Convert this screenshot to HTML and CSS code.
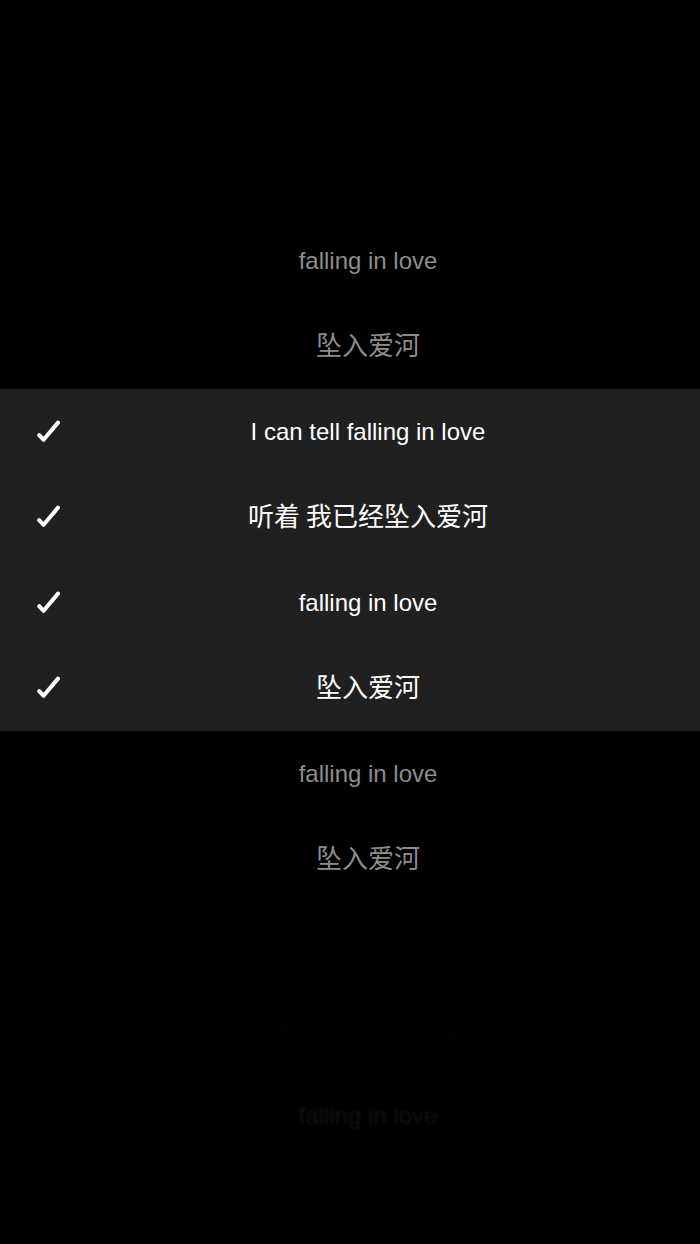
FILE: index.html
```html
<!DOCTYPE html>
<html lang="zh">
<head>
<meta charset="utf-8">
<title>Lyrics</title>
<link rel="stylesheet" href="styles.css">
</head>
<body>
<main class="lyrics">
  <div class="row dim"><span class="check"></span><span class="text en">falling in love</span><span></span></div>
  <div class="row dim"><span class="check"></span><span class="text zh">坠入爱河</span><span></span></div>
  <section class="band">
    <div class="row on"><span class="check"><svg viewBox="0 0 24 24" width="24" height="24"><path d="M3.2 15.2 L7.6 19.8 L22 2.6" fill="none" stroke="#fff" stroke-width="4" stroke-linecap="round" stroke-linejoin="round"/></svg></span><span class="text en">I can tell falling in love</span><span></span></div>
    <div class="row on"><span class="check"><svg viewBox="0 0 24 24" width="24" height="24"><path d="M3.2 15.2 L7.6 19.8 L22 2.6" fill="none" stroke="#fff" stroke-width="4" stroke-linecap="round" stroke-linejoin="round"/></svg></span><span class="text zh">听着 我已经坠入爱河</span><span></span></div>
    <div class="row on"><span class="check"><svg viewBox="0 0 24 24" width="24" height="24"><path d="M3.2 15.2 L7.6 19.8 L22 2.6" fill="none" stroke="#fff" stroke-width="4" stroke-linecap="round" stroke-linejoin="round"/></svg></span><span class="text en">falling in love</span><span></span></div>
    <div class="row on"><span class="check"><svg viewBox="0 0 24 24" width="24" height="24"><path d="M3.2 15.2 L7.6 19.8 L22 2.6" fill="none" stroke="#fff" stroke-width="4" stroke-linecap="round" stroke-linejoin="round"/></svg></span><span class="text zh">坠入爱河</span><span></span></div>
  </section>
  <div class="row dim"><span class="check"></span><span class="text en">falling in love</span><span></span></div>
  <div class="row dim"><span class="check"></span><span class="text zh">坠入爱河</span><span></span></div>
  <div class="row ghost1"><span class="check"></span><span class="text en">I can tell falling in love</span><span></span></div>
  <div class="row ghost1"><span class="check"></span><span class="text zh">听着 我已经坠入爱河</span><span></span></div>
  <div class="row ghost2"><span class="check"></span><span class="text en">falling in love</span><span></span></div>
</main>
</body>
</html>
```

FILE: styles.css
```css
html, body {
  margin: 0;
  padding: 0;
  background: #000;
}

body {
  width: 700px;
  height: 1244px;
  overflow: hidden;
  font-family: "Liberation Sans", Arial, "Noto Sans CJK SC", sans-serif;
}

.lyrics {
  display: flex;
  flex-direction: column;
  padding-top: 218px;
}

.band {
  background: #202020;
}

.row {
  height: 85.5px;
  display: grid;
  grid-template-columns: 72px 1fr 36px;
  align-items: center;
}

.check {
  padding-left: 36px;
  display: flex;
  align-items: center;
}

.check svg {
  display: block;
}

.text {
  text-align: center;
  white-space: nowrap;
}

.en {
  font-size: 24px;
  font-family: "Liberation Sans", Arial, sans-serif;
}

.zh {
  font-size: 26px;
  margin-top: -6px;
  font-family: "Noto Sans CJK SC", "Liberation Sans", sans-serif;
}

.dim { color: #8c8c8c; }
.on { color: #ffffff; }
.ghost1 { color: #020202; }
.ghost2 { color: #101010; filter: blur(0.8px); }
```
